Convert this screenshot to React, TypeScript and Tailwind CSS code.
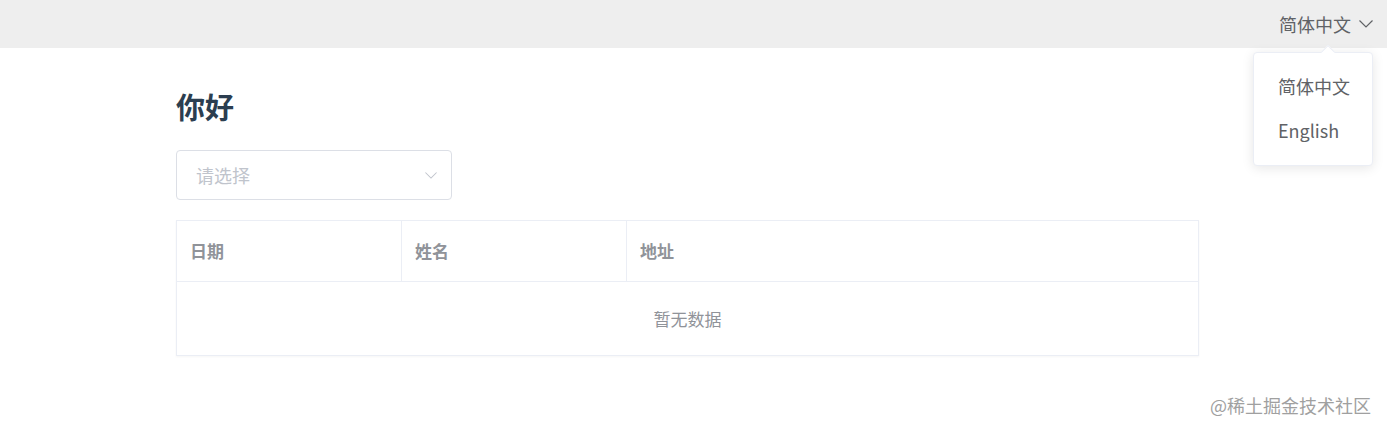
const font = { fontFamily: '"Noto Sans CJK SC", "Noto Sans", sans-serif' };

function Arrow({ className }: { className?: string }) {
  return (
    <svg viewBox="0 0 14 8" fill="none" stroke="currentColor" strokeWidth={1.2} className={className}>
      <polyline points="0.5,0.5 7,7 13.5,0.5" />
    </svg>
  );
}

export default function App() {
  return (
    <div className="relative w-[1387px] h-[430px] bg-white text-[#606266]" style={font}>
      {/* Top bar */}
      <header className="h-[48px] bg-[#eeeeee] flex items-center justify-end pr-[14px]">
        <div className="flex items-center gap-[8px] text-[18px] text-[#606266]">
          <span>简体中文</span>
          <Arrow className="w-[14px] h-[8px]" />
        </div>
      </header>

      {/* Language dropdown */}
      <div className="absolute left-[1253px] top-[52px] w-[120px] pt-[11px] pb-[13px] bg-white rounded-[4px] border border-[#ebeef5] shadow-[0_2px_12px_rgba(0,0,0,0.1)]">
        <div className="absolute -top-[6px] left-[69px] w-[10px] h-[10px] bg-white border-l border-t border-[#ebeef5] rotate-45" />
        <div className="px-[24px] h-[44px] flex items-center whitespace-nowrap text-[18px] text-[#606266]">简体中文</div>
        <div className="px-[24px] h-[44px] flex items-center whitespace-nowrap text-[18px] text-[#606266]">English</div>
      </div>

      <main className="ml-[176px] w-[1023px] pt-[38px]">
        <h1 className="text-[29px] font-bold text-[#2c3e50] leading-[40px]">你好</h1>

        <div className="mt-[24px] w-[276px] h-[50px] border border-[#dcdfe6] rounded-[4px] flex items-center justify-between pl-[19px] pr-[14px]">
          <span className="text-[18px] text-[#c0c4cc]">请选择</span>
          <Arrow className="w-[12px] h-[7px] text-[#c0c4cc]" />
        </div>

        <div className="mt-[20px] border border-[#ebeef5] shadow-[0_1px_2px_rgba(0,0,0,0.04)]">
          <div className="flex h-[61px] border-b border-[#ebeef5] text-[17px] font-bold text-[#909399]">
            <div className="w-[225px] flex items-center pl-[13px] border-r border-[#ebeef5]">日期</div>
            <div className="w-[225px] flex items-center pl-[13px] border-r border-[#ebeef5]">姓名</div>
            <div className="flex-1 flex items-center pl-[13px]">地址</div>
          </div>
          <div className="h-[73px] flex items-center justify-center text-[17px] text-[#909399]">暂无数据</div>
        </div>
      </main>

      <div className="absolute right-[16px] top-[392px] text-[18px] text-[#a0a0a0]">@稀土掘金技术社区</div>
    </div>
  );
}
